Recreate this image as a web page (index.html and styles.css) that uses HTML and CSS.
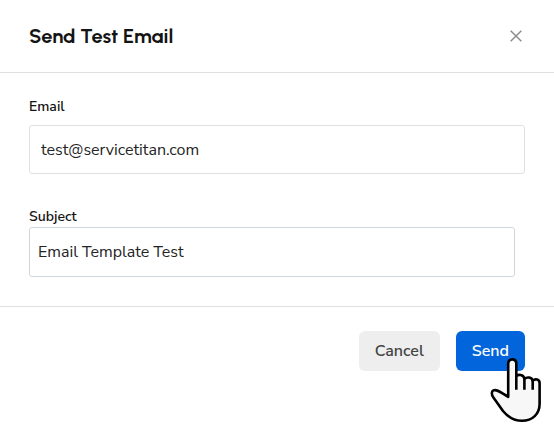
FILE: index.html
```
<!DOCTYPE html>
<html lang="en">
<head>
    <meta charset="UTF-8">
    <meta name="viewport" content="width=device-width, initial-scale=1.0">
    <title>Send Test Email</title>
    <link rel="stylesheet" href="styles.css">
</head>
<body>
    <form class="modal">
        <div class="modal-header">
            <h1>Send Test Email</h1>
            <button type="button" class="close-button" aria-label="Close">
                <svg width="12" height="12" viewBox="0 0 12 12" fill="none" stroke="#8a8a8a" stroke-width="1.4">
                    <path d="M0.7 0.7L11.3 11.3M11.3 0.7L0.7 11.3"/>
                </svg>
            </button>
        </div>

        <div class="modal-body">
            <div class="field">
                <label for="email">Email</label>
                <input type="text" id="email" class="email-input" value="test@servicetitan.com">
            </div>
            <div class="field subject-field">
                <label for="subject">Subject</label>
                <input type="text" id="subject" class="subject-input" value="Email Template Test">
            </div>
        </div>

        <div class="modal-footer">
            <button type="button" class="button">Cancel</button>
            <div class="send-wrap">
                <button type="button" class="button primary">Send</button>
                <svg class="pointer" width="52" height="65" viewBox="0 0 52 65" fill="#f7f7f7" stroke="#000" stroke-width="2.6" stroke-linejoin="round" stroke-linecap="round">
                    <path d="M18.2 38.8V5.6C18.2 3 19.8 1.4 22.2 1.4S26.3 3 26.3 5.6V18C28 16.4 33.6 16 34.4 20.8C37 18.6 41.8 19 42.7 22.6C45.4 20.2 49.6 21.4 49.6 25V46C49.6 56 42.5 62.8 32 62.8C24 62.8 17.5 58.5 13 53L3.4 39.6C1.2 36.4 1.4 33.4 3.4 32.4C6.6 31 10.5 34.2 18.2 38.8Z"/>
                    <path stroke-linecap="butt" d="M26.3 17V31.7M34.4 20V31.7M42.7 22V31.7"/>
                </svg>
            </div>
        </div>
    </form>
</body>
</html>
```
FILE: styles.css
```
* {
    margin: 0;
    padding: 0;
    box-sizing: border-box;
}

body {
    min-height: 100vh;
    font-family: "Nunito Sans", Nunito, "Noto Sans", sans-serif;
    font-size: 16px;
    color: #141414;
    background: #fff;
}

.modal-header {
    display: flex;
    align-items: center;
    justify-content: space-between;
    padding: 23px 32px 23px 29px;
    border-bottom: 1px solid #dfe0e1;
}

.modal-header h1 {
    font-family: "Sofia Pro", Urbanist, Outfit, "Lato", sans-serif;
    font-size: 20px;
    font-weight: 700;
    line-height: 26px;
}

.close-button {
    display: flex;
    border: none;
    background: none;
    cursor: pointer;
}

.modal-body {
    padding: 24px 29px 29px;
    border-bottom: 1px solid #dfe0e1;
}

.field {
    display: flex;
    flex-direction: column;
    gap: 8px;
}

.field label {
    font-size: 14px;
    font-weight: 600;
    line-height: 20px;
}

.field input {
    height: 49px;
    border: 1px solid #dfe0e1;
    border-radius: 3px;
    font: inherit;
    color: #242424;
    outline: none;
}

.email-input {
    padding: 0 11px;
}

.subject-field {
    gap: 0;
    margin-top: 33px;
    margin-right: 10px;
}

.field .subject-input {
    height: 50px;
    padding: 0 8px;
    border-color: #cfd6dc;
}

.modal-footer {
    display: flex;
    justify-content: flex-end;
    gap: 16px;
    padding: 24px 29px;
}

.button {
    height: 40px;
    padding: 0 16px;
    border: none;
    border-radius: 6px;
    background: #eee;
    color: #444;
    font: inherit;
    font-weight: 600;
    cursor: pointer;
}

.button.primary {
    background: #0265dc;
    color: #fff;
}

.send-wrap {
    position: relative;
}

/* hand cursor sits on top of the send button */
.pointer {
    position: absolute;
    top: 27px;
    left: 34px;
    pointer-events: none;
}
```
